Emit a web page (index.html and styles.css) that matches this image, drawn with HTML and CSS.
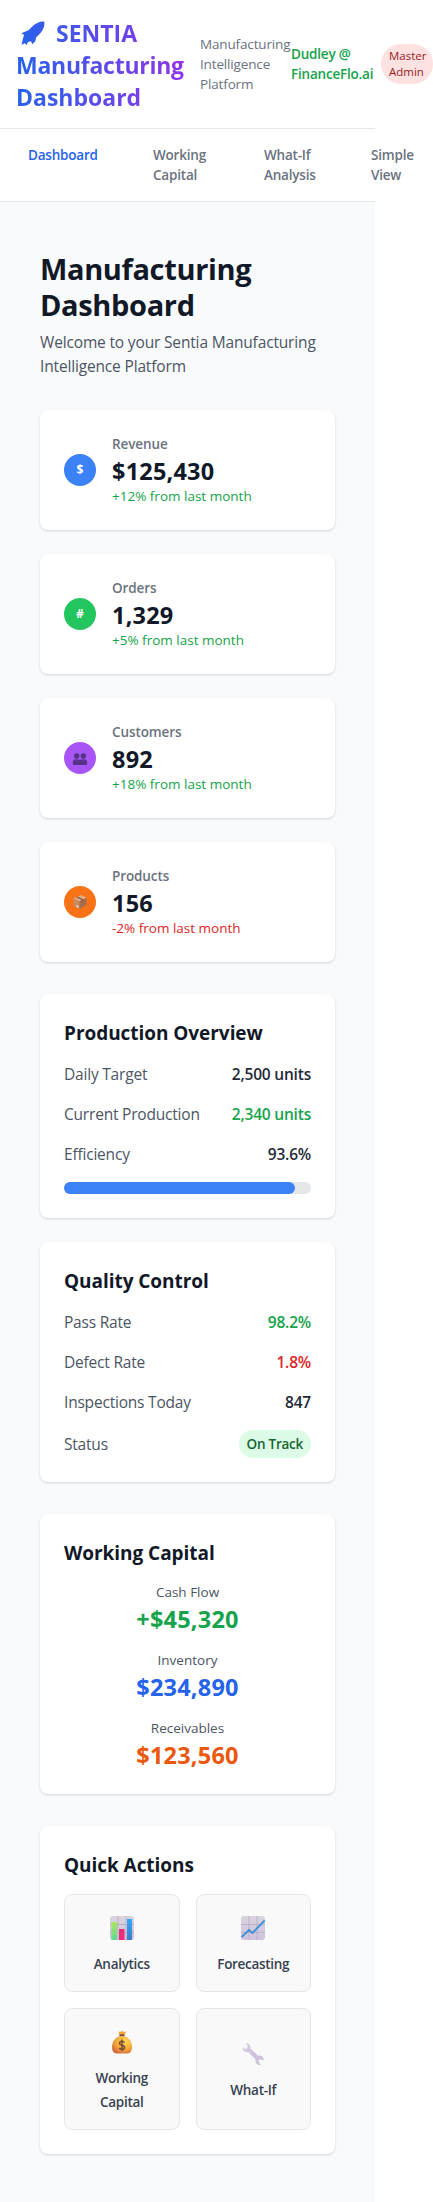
FILE: index.html
```html
<!DOCTYPE html>
<html lang="en">
<head>
<meta charset="utf-8">
<title>Sentia Manufacturing Dashboard</title>
<link rel="stylesheet" href="styles.css">
</head>
<body>
<div class="app">
  <header class="header">
    <div class="brand"><svg class="rocket" viewBox="0 0 26 25"><defs><linearGradient id="rk" gradientUnits="userSpaceOnUse" x1="-4" y1="0" x2="164" y2="0"><stop offset="0" stop-color="#2563eb"/><stop offset="1" stop-color="#9333ea"/></linearGradient></defs><path fill="url(#rk)" d="M24.3 .6C20 .2 15.500 2.300 12 5.800L8.500 9.300 3 11.500 1.300 13.200 4.200 13.500 3 17.500 1.500 23.800 4.800 22.300 6.500 24 8 21 11 20.200 12.200 23.300 15.300 20.300 16.200 16.300 20.300 12.300C23.500 9 25 4.500 24.300 .6Z"/></svg><span class="grad g1">SENTIA</span><br><span class="grad g2">Manufacturing</span><br><span class="grad">Dashboard</span></div>
    <div class="tagline">Manufacturing<br>Intelligence<br>Platform</div>
    <div class="user">Dudley @<br>FinanceFlo.ai</div>
    <div class="role">Master<br>Admin</div>
  </header>
  <nav class="nav">
    <a class="nav-item active">Dashboard</a>
    <a class="nav-item w2">Working<br>Capital</a>
    <a class="nav-item w3">What-If<br>Analysis</a>
    <a class="nav-item">Simple<br>View</a>
  </nav>
  <main class="main">
    <h1>Manufacturing<br>Dashboard</h1>
    <p class="welcome">Welcome to your Sentia Manufacturing<br>Intelligence Platform</p>

    <section class="stack">
      <div class="card stat"><span class="dot blue">$</span><div><div class="label">Revenue</div><div class="value">$125,430</div><div class="change up">+12% from last month</div></div></div>
      <div class="card stat"><span class="dot green">#</span><div><div class="label">Orders</div><div class="value">1,329</div><div class="change up">+5% from last month</div></div></div>
      <div class="card stat"><span class="dot purple"><svg width="16" height="16" viewBox="0 0 16 16"><g fill="#553285"><circle cx="4.700" cy="6" r="2.700"/><circle cx="11.300" cy="6" r="2.700"/><path d="M1 15v-3q0-2.500 2.700-2.700h2q1.700 0 2.300 1 .6-1 2.300-1h2q2.700.2 2.700 2.700V15z"/></g><path d="M3.500 9.500l1.200 2L6 9.500M10 9.500l1.300 2 1.200-2" fill="#7b3fb5"/></svg></span><div><div class="label">Customers</div><div class="value">892</div><div class="change up">+18% from last month</div></div></div>
      <div class="card stat"><span class="dot orange"><svg width="16" height="16" viewBox="0 0 16 16"><path fill="#dfae84" d="M1.500 4.500L9 1l5.500 2.500-7 4z"/><path fill="#c58c62" d="M1.500 4.500l6 3V15l-6-3.500z"/><path fill="#a86d4d" d="M7.500 7.500l7-4V11l-7 4z"/><path fill="#8c5b48" d="M4 3.300L5.500 2.600 11 5.300V8L9.500 8.800V6z"/><path fill="#e8ddeb" d="M4.500 11l2 1v2l-2-1z"/></svg></span><div><div class="label">Products</div><div class="value">156</div><div class="change down">-2% from last month</div></div></div>
    </section>

    <section class="stack">
      <div class="card">
        <h2>Production Overview</h2>
        <div class="rows">
          <div class="row"><span class="name">Daily Target</span><span class="num">2,500 units</span></div>
          <div class="row"><span class="name">Current Production</span><span class="num up">2,340 units</span></div>
          <div class="row"><span class="name">Efficiency</span><span class="num">93.6%</span></div>
          <div class="bar"><div class="fill" style="width:93.6%"></div></div>
        </div>
      </div>
      <div class="card">
        <h2>Quality Control</h2>
        <div class="rows">
          <div class="row"><span class="name">Pass Rate</span><span class="num up">98.2%</span></div>
          <div class="row"><span class="name">Defect Rate</span><span class="num down">1.8%</span></div>
          <div class="row"><span class="name">Inspections Today</span><span class="num">847</span></div>
          <div class="row"><span class="name">Status</span><span class="pill">On Track</span></div>
        </div>
      </div>
    </section>

    <section class="card">
      <h2>Working Capital</h2>
      <div class="rows center">
        <div><div class="sub">Cash Flow</div><div class="value up">+$45,320</div></div>
        <div><div class="sub">Inventory</div><div class="value inv">$234,890</div></div>
        <div><div class="sub">Receivables</div><div class="value rec">$123,560</div></div>
      </div>
    </section>

    <section class="card">
      <h2>Quick Actions</h2>
      <div class="actions">
        <button class="action"><svg width="24" height="24" viewBox="0 0 24 24"><defs><linearGradient id="pa" x1="0" y1="0" x2="0" y2="1"><stop offset="0" stop-color="#d9d5df"/><stop offset="1" stop-color="#cfc1df"/></linearGradient><linearGradient id="gb" x1="0" y1="0" x2="0" y2="1"><stop offset="0" stop-color="#b0e35c"/><stop offset="1" stop-color="#5fdc94"/></linearGradient><linearGradient id="bb" x1="0" y1="0" x2="0" y2="1"><stop offset="0" stop-color="#33aaf8"/><stop offset="1" stop-color="#3c7cc8"/></linearGradient></defs><rect width="24" height="24" rx="3" fill="url(#pa)"/><path d="M8 0v24M16 0v24M0 8.500h24M0 16.500h24" stroke="#b9b0c4" stroke-width=".9"/><path d="M1.500 6h5.500v18H1.500z" fill="url(#gb)"/><path d="M9 13.500q0-.5.500-.5h4.500q.5 0 .5.500V24H9z" fill="#ea2f78"/><path d="M17 3h5v21h-5z" fill="url(#bb)"/></svg><span>Analytics</span></button>
        <button class="action"><svg width="24" height="24" viewBox="0 0 24 24"><rect width="24" height="24" rx="3" fill="url(#pa)"/><path d="M8 0v24M16 0v24M0 8.500h24M0 16.500h24" stroke="#b9b0c4" stroke-width=".9"/><path d="M.5 21L8 14l3.500 3L23.700 4.500" fill="none" stroke="#3b90d9" stroke-width="1.900"/></svg><span>Forecasting</span></button>
        <button class="action"><svg width="24" height="24" viewBox="0 0 24 24"><defs><radialGradient id="mb" cx=".65" cy=".3" r=".8"><stop offset="0" stop-color="#ffda52"/><stop offset=".6" stop-color="#f2a43a"/><stop offset="1" stop-color="#cf6540"/></radialGradient></defs><path d="M8.300 1.500l2.200.6L12 .6l1.500 1.500 2.700-.6-1.700 3.500h-5z" fill="#f3a83b"/><path d="M9.500 4.300h5v2.200h-5z" fill="#7d4941"/><path d="M9.300 6.200h5.400C19 7.500 22 12 22 17c0 4-1.800 6.400-4.500 6.400h-11C3.800 23.400 2 21 2 17 2 12 5 7.500 9.300 6.200z" fill="url(#mb)"/><path d="M12 9.500V21M14.500 12.600c-.5-1-1.300-1.400-2.500-1.400-3.300 0-3.300 3.600 0 4 3.500.5 3.300 4.200 0 4.200-1.300 0-2.200-.5-2.600-1.500" fill="none" stroke="#7d4a34" stroke-width="1.500"/></svg><span>Working<br>Capital</span></button>
        <button class="action"><svg width="24" height="24" viewBox="0 0 24 24"><defs><linearGradient id="wr" x1="0" y1="0" x2="1" y2="1"><stop offset="0" stop-color="#d9d6df"/><stop offset=".5" stop-color="#cfc0e2"/><stop offset="1" stop-color="#cbc5d3"/></linearGradient></defs><path fill="url(#wr)" d="M5 1.200C7.500.7 10.100 3 9.500 6.200L17 13.700C20.500 13 23.300 15.500 22.500 18.700L19.800 17.200 17.500 18.200 18 20.800 20.200 22.600C16.800 24 13.700 21 14.600 17.500L7 9.800C4 10.800 1 8.300 1.500 5.200L4.200 6.900 6.300 5.700 6.500 3.400Z"/></svg><span>What-If</span></button>
      </div>
    </section>
  </main>
</div>
</body>
</html>
```
FILE: styles.css
```css
* { box-sizing: border-box; margin: 0; }
body { background: #fff; font: 15.500px/24px "Open Sans", "Noto Sans", sans-serif; color: #1f2937; white-space: nowrap; }
.app { width: 375px; }

.header { height: 129px; padding: 16px; display: flex; align-items: center; border-bottom: 1px solid #e5e7eb; background: #fff; }
.brand { flex: none; width: 184px; padding-top: 2px; font-size: 23px; font-weight: 700; line-height: 32px; }
.grad { background: linear-gradient(90deg, #2563eb, #9333ea) 0 0 / 172px 100% no-repeat; -webkit-background-clip: text; background-clip: text; color: transparent; }
.g1 { background-position: -40px 0; }
.g2 { letter-spacing: -.25px; }
.rocket { width: 26px; height: 25px; margin: 0 10px 0 4px; vertical-align: -4px; }
.tagline { flex: none; width: 91px; font-size: 13.500px; line-height: 20px; letter-spacing: -.15px; color: #6b7280; }
.user { flex: none; width: 90px; font-size: 13.500px; line-height: 20px; font-weight: 600; letter-spacing: -.2px; color: #16a34a; }
.role { flex: none; width: 52px; padding: 4px 8px; border-radius: 20px; font-size: 11.500px; line-height: 16px; background: #fee2e2; color: #991b1b; }

.nav { height: 73px; padding: 16px 0 0 28px; display: flex; gap: 56px; border-bottom: 1px solid #e5e7eb; background: #fff; }
.nav-item { flex: none; font-size: 13.500px; line-height: 20px; font-weight: 600; letter-spacing: -.2px; color: #6b7280; }
.active { width: 69px; color: #2563eb; }
.w2 { width: 55px; }
.w3 { width: 51px; }

.main { display: flex; flex-direction: column; gap: 32px; padding: 48px 40px; background: #f9fafb; }
h1 { height: 72px; padding-top: 1px; font-size: 29px; line-height: 36px; font-weight: 700; letter-spacing: -.35px; color: #111827; margin-bottom: -24px; }
.welcome { letter-spacing: -.16px; color: #4b5563; }
.stack { display: flex; flex-direction: column; gap: 24px; }
.card { padding: 24px; border-radius: 8px; background: #fff; box-shadow: 0 1px 3px rgba(0,0,0,.1), 0 1px 2px rgba(0,0,0,.06); }
.stat { display: flex; align-items: center; gap: 16px; }
.dot { width: 32px; height: 32px; border-radius: 50%; display: flex; align-items: center; justify-content: center; color: #fff; font-size: 12px; font-weight: 700; }
.blue { background: #3b82f6; }
.green { background: #22c55e; }
.purple { background: #a855f7; }
.orange { background: #f97316; }
.label { font-size: 13.500px; line-height: 20px; font-weight: 600; letter-spacing: -.1px; color: #6b7280; }
.value { height: 32px; padding-top: 1px; font-size: 23.500px; line-height: 32px; font-weight: 700; letter-spacing: .2px; color: #111827; }
.change, .sub { font-size: 13.500px; line-height: 20px; }
.sub { color: #4b5563; }
.card .up { color: #16a34a; }
.card .down { color: #dc2626; }
.inv { color: #2563eb; }
.rec { color: #ea580c; }

h2 { height: 28px; padding-top: 1px; font-size: 19px; line-height: 28px; font-weight: 700; letter-spacing: -.05px; color: #111827; margin-bottom: 16px; }
.rows { display: flex; flex-direction: column; gap: 16px; }
.row { display: flex; justify-content: space-between; align-items: center; }
.name { letter-spacing: -.2px; color: #4b5563; }
.num { font-weight: 600; letter-spacing: -.2px; }
.pill { padding: 4px 8px; border-radius: 14px; background: #dcfce7; color: #166534; font-size: 13.500px; line-height: 20px; font-weight: 600; letter-spacing: -.25px; }
.bar { height: 12px; border-radius: 6px; background: #e5e7eb; }
.fill { height: 12px; border-radius: 6px; background: #3b82f6; }
.center { text-align: center; }

.actions { display: grid; grid-template-columns: 1fr 1fr; gap: 16px; }
.action { display: flex; flex-direction: column; align-items: center; justify-content: center; gap: 12px; padding: 21px 16px 15px; border: 1px solid #e5e7eb; border-radius: 8px; background: #f9f9f9; color: #374151; font: 600 13.500px/24px "Open Sans", "Noto Sans", sans-serif; letter-spacing: -.3px; }
```
